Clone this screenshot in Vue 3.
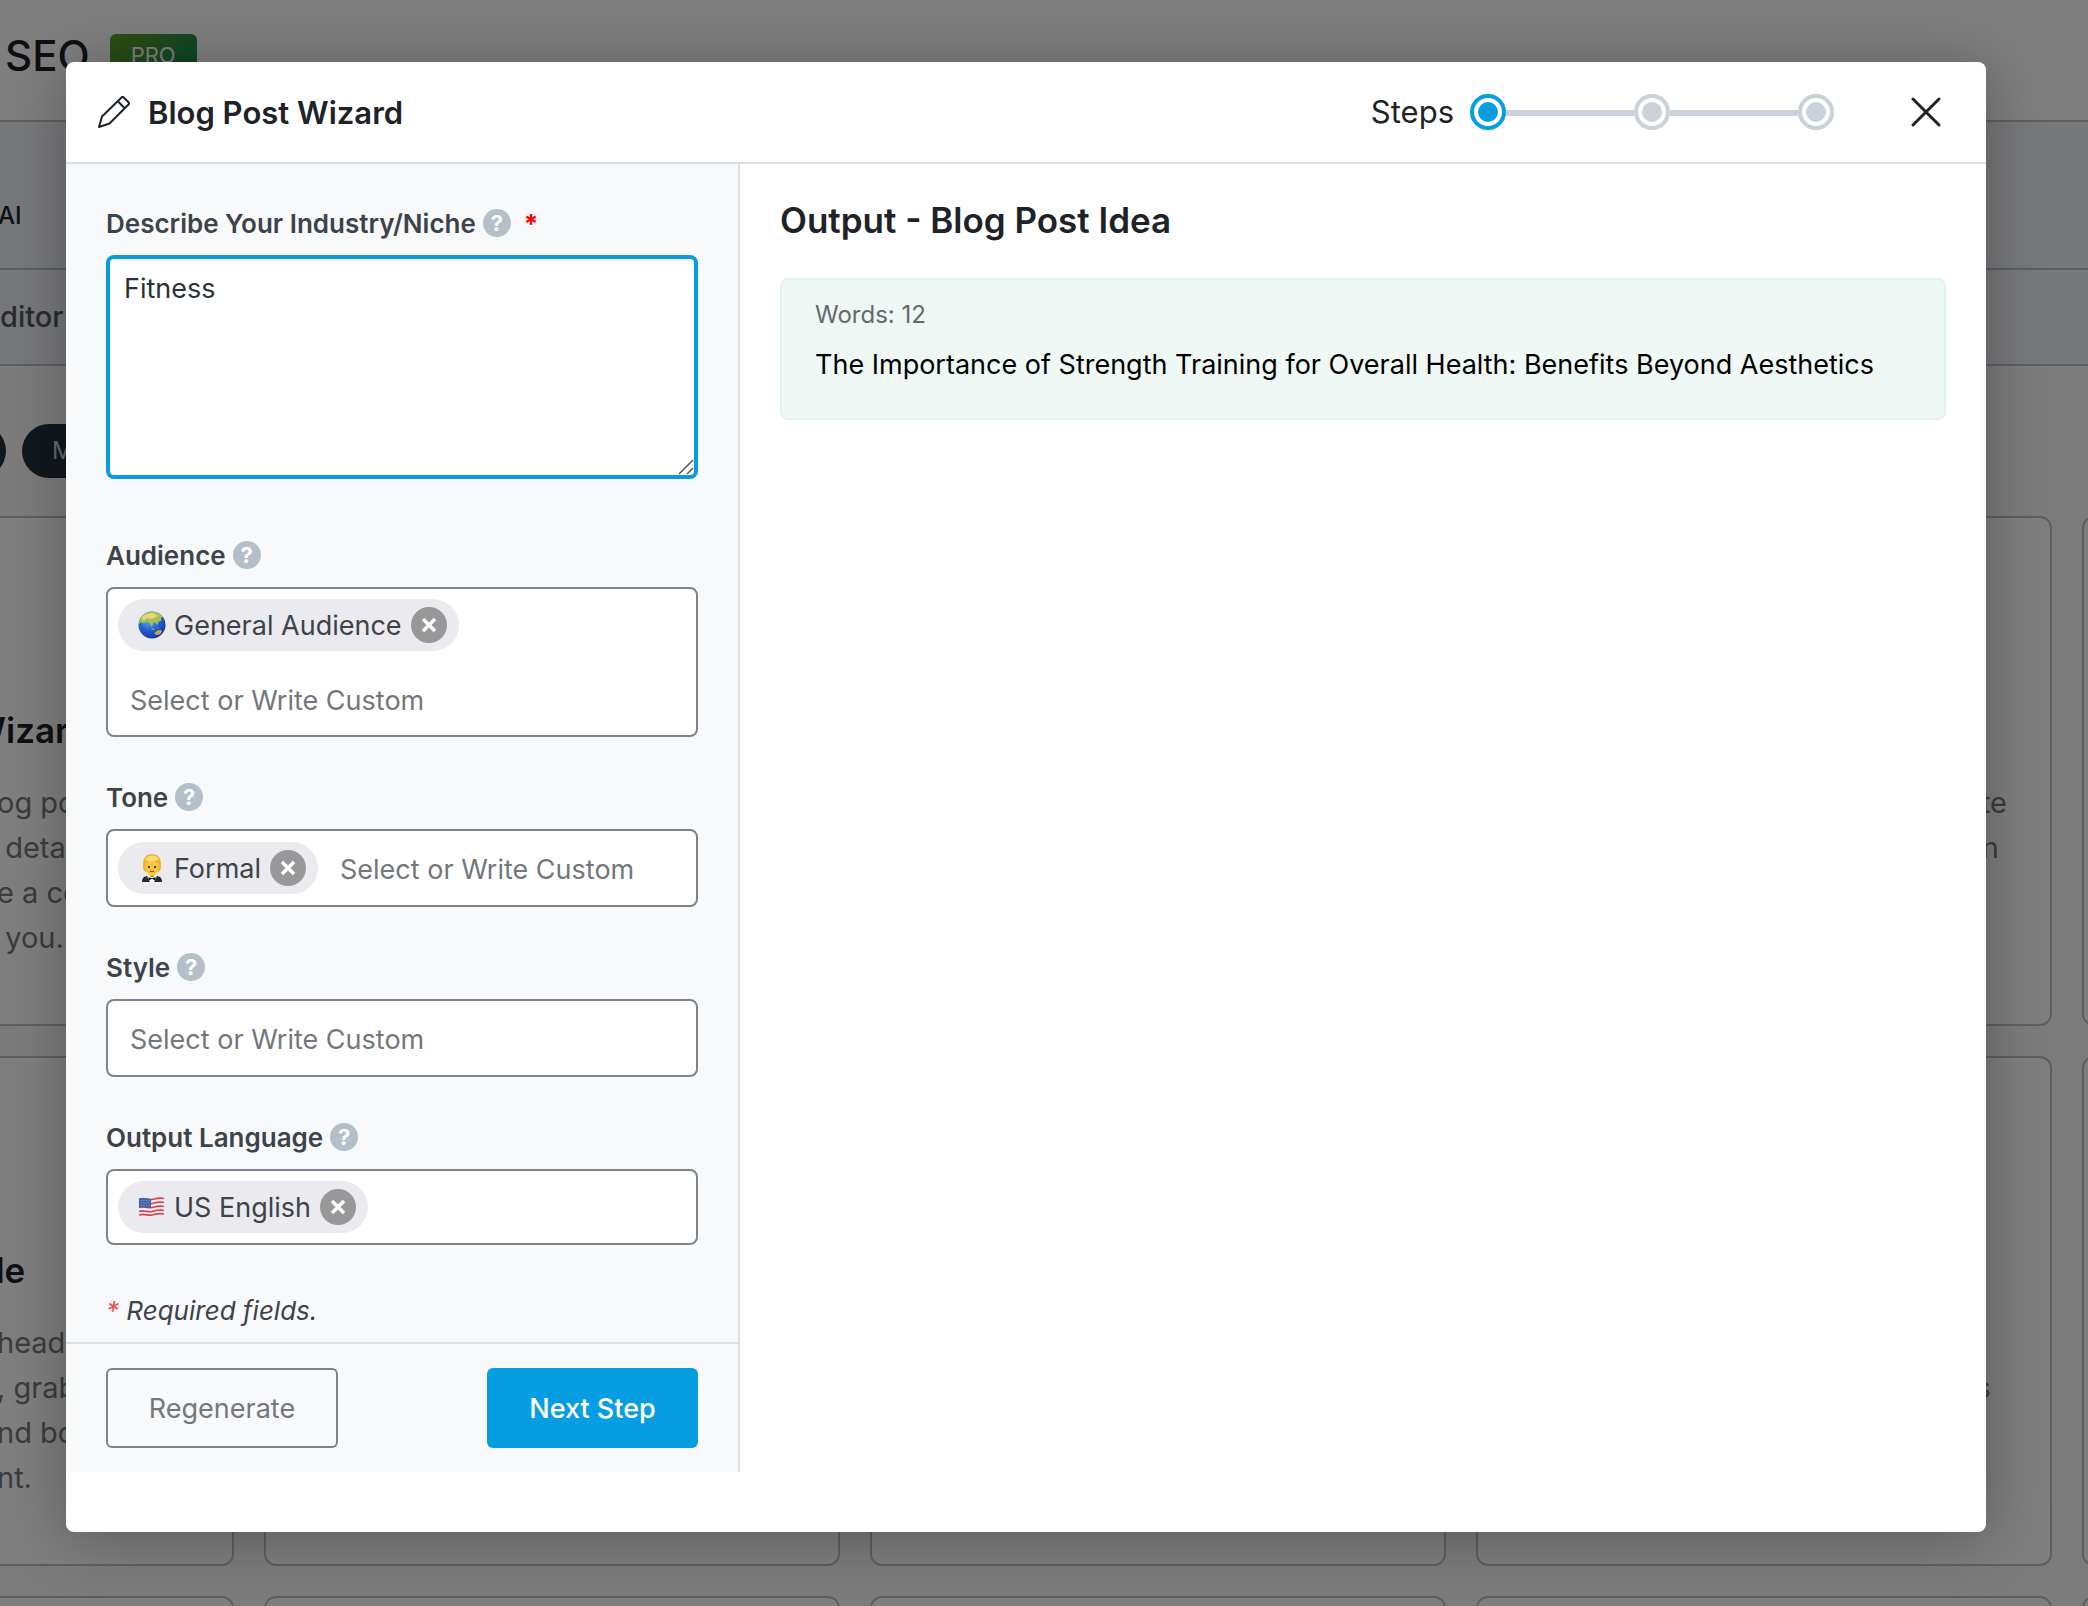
<script setup>
import { ref } from 'vue'

const niche = ref('Fitness')
const steps = ref([true, false, false])

const fields = ref([
  { id: 'audience', label: 'Audience', chip: 'General Audience', icon: 'globe', placeholder: 'Select or Write Custom', wrap: true },
  { id: 'tone', label: 'Tone', chip: 'Formal', icon: 'person', placeholder: 'Select or Write Custom' },
  { id: 'style', label: 'Style', chip: '', icon: '', placeholder: 'Select or Write Custom' },
  { id: 'language', label: 'Output Language', chip: 'US English', icon: 'flag', placeholder: '' },
])

const cards = [
  { title: 'Blog Post Wizard', start: ['og po', ' deta', 'e a co', ' you.'] },
  {}, {},
  { end: ['te', 'n '] },
  {},
  { title: 'Post Title', start: ['head', ', grab', 'nd bo', 'nt.'] },
  {}, {},
  { end: [' ', 's  '] },
  {}, {}, {}, {}, {}, {},
]
</script>

<template>
  <div class="screen">
    <div class="page" aria-hidden="true">
      <header class="brand">
        <span class="brand-name">SEO</span>
        <span class="pro">PRO</span>
      </header>
      <div class="tabs">AI</div>
      <div class="subtabs">ditor</div>
      <div class="filters">
        <span class="pill pill-first"></span>
        <span class="pill">M</span>
      </div>
      <div class="grid">
        <article v-for="(c, i) in cards" :key="i" class="card">
          <h3 class="card-title">{{ c.title }}</h3>
          <p v-if="c.start" class="lines lines-start"><span v-for="l in c.start" :key="l">{{ l }}</span></p>
          <p v-if="c.end" class="lines lines-end"><span v-for="l in c.end" :key="l">{{ l }}</span></p>
        </article>
      </div>
    </div>

    <div class="overlay">
      <section class="modal" role="dialog" aria-labelledby="wizard-title">
        <header class="modal-head">
          <svg class="pencil" viewBox="0 0 32 32" fill="none" stroke="#1d2327" stroke-width="2" stroke-linejoin="round" aria-hidden="true">
            <path d="M1 31 4 20.500 23.500 1.500c.7-.7 1.500-.7 2.200 0l4.800 4.800c.7.700.7 1.500 0 2.200L11.500 27.500zM20 5.500l6.500 6.500" />
          </svg>
          <h2 id="wizard-title" class="modal-title">Blog Post Wizard</h2>
          <span class="steps-label">Steps</span>
          <div class="steps">
            <span v-for="(on, i) in steps" :key="i" class="step" :class="{ on }"></span>
          </div>
          <button class="close" type="button" aria-label="Close">
            <svg viewBox="0 0 30 30" stroke="#1d2327" stroke-width="3" stroke-linecap="round"><path d="M2 2l26 26M28 2L2 28" /></svg>
          </button>
        </header>

        <div class="modal-body">
          <form class="side" @submit.prevent>
            <div class="fields">
              <div class="field field-area">
                <div class="label-row">
                  <label for="niche">Describe Your Industry/Niche</label>
                  <span class="help">?</span>
                  <span class="star">*</span>
                </div>
                <div class="area-wrap">
                  <textarea id="niche" v-model="niche" class="area"></textarea>
                  <svg class="grip" viewBox="0 0 16 16" stroke="#555" stroke-width="1.500"><path d="M1 15L15 1M9 15l6-6" /></svg>
                </div>
              </div>

              <div v-for="f in fields" :key="f.id" class="field">
                <div class="label-row">
                  <label :for="f.id">{{ f.label }}</label>
                  <span class="help">?</span>
                </div>
                <div class="tagbox" :class="{ wrap: f.wrap, plain: !f.placeholder }">
                  <span v-if="f.chip" class="chip">
                    <svg v-if="f.icon === 'globe'" class="emoji" viewBox="0 0 28 28" aria-hidden="true">
                      <defs>
                        <radialGradient id="sea" cx=".38" cy=".3" r=".75">
                          <stop offset="0" stop-color="#6fb4ee" />
                          <stop offset=".5" stop-color="#2663d6" />
                          <stop offset="1" stop-color="#16309b" />
                        </radialGradient>
                      </defs>
                      <circle cx="14" cy="14" r="13.500" fill="url(#sea)" />
                      <path d="M1.500 9C4 3.500 9 .8 15 .8c4 0 8 2 10 5l-2 1 .5 3-3 1-1 3.500-2.500-3-2 1-1 4-2-4-3-2-3 2-3-1-2 2z" fill="#a9bf52" />
                      <path d="M4 6c3-3 7-4 11-4l5 3-6 3-5-1-4 3z" fill="#e6d778" />
                      <path d="M16.500 22c1-2 4-3.500 6.500-3l1 1c-1 3-3 4-5 4-2-.3-2.500-1-2.500-2z" fill="#c9a24c" />
                      <path d="M14 17l3 1-1 1-3-1zM19 16l2 1-1 1z" fill="#79b35a" />
                    </svg>
                    <svg v-else-if="f.icon === 'person'" class="emoji" viewBox="0 0 28 28" aria-hidden="true">
                      <path d="M4 28c0-4 2-6 6-6h8c4 0 6 2 6 6z" fill="#25272c" />
                      <path d="M10 21l4 2 4-2 1 1-3 6h-4l-3-6z" fill="#fff" />
                      <path d="M11 18h6v3l-3 2-3-2z" fill="#e89e13" />
                      <path d="M5.500 16C3.500 6 7 0 14 0s10.500 6 8.500 16l-2 2h-13z" fill="#eeb02c" />
                      <path d="M7.500 9c3-1 5-3 6-3s4 2 7 3v4c0 5-3 8.500-6.500 8.500S7.500 18 7.500 13z" fill="#fcc83b" />
                      <path d="M7 6c2-5 10-6.500 14-1-4 3-9 3.500-14 1z" fill="#fbdb73" />
                      <circle cx="11" cy="13" r="1.200" fill="#5a3a12" />
                      <circle cx="17" cy="13" r="1.200" fill="#5a3a12" />
                      <path d="M12 17.500h4" stroke="#9a4a18" stroke-width="1.200" />
                      <path d="M10.500 23l3.500 1.500 3.500-1.500v3.500L14 25l-3.500 1.500z" fill="#17181b" />
                    </svg>
                    <svg v-else class="emoji" viewBox="0 0 28 28" aria-hidden="true">
                      <path d="M1 6c5-2 9 1 13 0s8-2 12-1v16c-4-1-8 0-12 1s-8-1-13 1z" fill="#f4f2f3" />
                      <path d="M1 6.500c5-2 9 1 13 0s8-2 12-1M1 10.500c5-2 9 1 13 0s8-2 12-1M1 14.500c5-2 9 1 13 0s8-2 12-1M1 18.500c5-2 9 1 13 0s8-2 12-1M1 22c5-2 9 1 13 0s8-2 12-1" fill="none" stroke="#d8434e" stroke-width="1.800" />
                      <path d="M1 5.500c5-2 8 .4 12 .2v9.300c-4 .4-7-1.800-12 0z" fill="#3f65a8" />
                      <path d="M3 7.500h9M3 10h9M3 12.500h9" stroke="#8fa6d2" stroke-width="1" stroke-dasharray="1 1.500" />
                    </svg>
                    <span class="chip-text">{{ f.chip }}</span>
                    <button class="remove" type="button" :aria-label="'Remove ' + f.chip">
                      <svg viewBox="0 0 16 16" stroke="#fff" stroke-width="3.500"><path d="M2 2l12 12M14 2L2 14" /></svg>
                    </button>
                  </span>
                  <input :id="f.id" class="entry" type="text" :placeholder="f.placeholder">
                </div>
              </div>

              <p class="required"><span>*</span> Required fields.</p>
            </div>
            <footer class="actions">
              <button class="btn btn-outline" type="button">Regenerate</button>
              <button class="btn btn-primary" type="submit">Next Step</button>
            </footer>
          </form>

          <main class="output">
            <h2 class="output-title">Output - Blog Post Idea</h2>
            <div class="result">
              <p class="words">Words: 12</p>
              <p class="idea">The Importance of Strength Training for Overall Health: Benefits Beyond Aesthetics</p>
            </div>
          </main>
        </div>
      </section>
    </div>
  </div>
</template>

<style>
body { margin: 0; }
</style>

<style scoped>
.screen, .screen * { box-sizing: border-box; }
.screen {
  position: relative;
  min-height: 100vh;
  overflow: hidden;
  font-family: Inter, "Liberation Sans", sans-serif;
  color: #1d2327;
}
h2, h3, p { margin: 0; }
button, input, textarea { font: inherit; color: inherit; }

/* Dimmed page */
.page { position: absolute; inset: 0; overflow: hidden; background: #f9f9f9; }
.brand {
  display: flex; align-items: center; gap: 20px;
  height: 122px; padding: 0 0 10px 5px;
  background: #fff; border-bottom: 2px solid #b8bfc9;
}
.brand-name { font-size: 42px; font-weight: 500; }
.pro {
  height: 42px; padding: 0 21px; border-radius: 6px;
  font-size: 22px; line-height: 42px; color: #fff;
  background: linear-gradient(135deg, #5f9f1f, #108a54);
}
.tabs, .subtabs { background: #eef0f4; border-bottom: 2px solid #b8bfc9; font-weight: 500; }
.tabs { height: 148px; padding-top: 76px; font-size: 24px; line-height: 36px; margin-left: -2px; }
.subtabs { height: 96px; font-size: 29px; line-height: 94px; color: #50575e; }
.filters { display: flex; gap: 16px; padding: 58px 0 38px; }
.pill {
  width: 120px; height: 54px; padding-left: 30px; border-radius: 27px;
  background: #23303a; color: #d5d8db; font-size: 24px; line-height: 54px;
}
.pill-first { margin-left: -114px; }
.grid {
  display: grid; grid-template-columns: repeat(5, 576px); grid-auto-rows: 510px;
  gap: 30px; margin-left: -342px;
}
.card {
  padding: 190px 43px 0; overflow: hidden;
  background: #fff; border: 2px solid #b8bfc9; border-radius: 12px;
}
.card-title { height: 44px; font-size: 35px; line-height: 44px; font-weight: 600; text-align: center; }
.lines {
  display: flex; flex-direction: column; margin-top: 28px;
  font-size: 29px; line-height: 45px; color: #74787c; white-space: pre;
}
.lines-start { padding-left: 294px; }
.lines-end { text-align: right; }

/* Dialog */
.overlay {
  position: relative; display: flex; min-height: 100vh;
  padding: 62px 102px 74px 66px; background: rgba(0, 0, 0, .5);
}
.modal {
  flex: 1; display: flex; flex-direction: column; padding-bottom: 60px;
  background: #fff; border-radius: 8px; box-shadow: 0 6px 60px rgba(0, 0, 0, .3);
}
.modal-head {
  display: flex; align-items: center; height: 102px;
  padding: 0 40px 0 32px; border-bottom: 2px solid #dcdfe3;
}
.pencil { width: 32px; height: 32px; }
.modal-title { margin-left: 18px; padding-top: 2px; font-size: 31px; line-height: 40px; font-weight: 600; }
.steps-label { margin-left: auto; font-size: 31px; line-height: 40px; }
.steps { display: flex; align-items: center; margin-left: 16px; }
.step {
  position: relative; width: 36px; height: 36px; padding: 4px;
  border: 4px solid #cbd1da; border-radius: 50%;
  background: #cbd1da content-box;
}
.step.on { border-color: #069de3; background-color: #069de3; }
.step + .step { margin-left: 128px; }
.step + .step::before {
  content: ""; position: absolute; top: 12px; right: 32px;
  width: 128px; height: 6px; background: #cbd1da;
}
.close { display: flex; margin-left: 72px; padding: 5px; border: 0; background: none; }
.close svg { width: 30px; height: 30px; }

.modal-body { flex: 1; display: flex; }
.side {
  flex: 0 0 674px; min-width: 0; display: flex; flex-direction: column;
  background: #f8f9fb; border-right: 2px solid #dcdfe3;
}
.fields { flex: 1; padding: 45px 40px 12px; }
.field { margin-bottom: 46px; }
.field-area { margin-bottom: 62px; }
.label-row {
  display: flex; align-items: center; gap: 7px; height: 28px; margin-bottom: 18px;
  font-size: 26px; font-weight: 600; color: #3c434a;
}
.help {
  width: 28px; height: 28px; border-radius: 50%;
  font-size: 22px; line-height: 28px; font-weight: 700; text-align: center;
  color: #fff; background: #b5bfc9;
}
.star { margin-left: 6px; font-weight: 700; color: #f00; }
.area-wrap { position: relative; }
.area {
  display: block; width: 100%; height: 224px; padding: 9px 14px;
  border: 4px solid #0a9ae0; border-radius: 8px; outline: 0; resize: none;
  background: #fff; color: #2c3338; font-size: 27px; line-height: 42px;
}
.grip { position: absolute; right: 4px; bottom: 4px; width: 16px; height: 16px; }
.tagbox {
  display: flex; align-items: center; height: 78px; padding: 0 10px;
  border: 2px solid #7e8389; border-radius: 8px; background: #fff;
}
.tagbox.wrap { flex-wrap: wrap; align-content: flex-start; height: 150px; padding-top: 10px; }
.tagbox.plain { height: 76px; }
.chip {
  display: flex; align-items: center; height: 52px; padding: 0 12px 0 20px;
  border-radius: 26px; background: #ebebef; color: #3c434a; font-size: 27px;
}
.emoji { width: 28px; height: 28px; }
.chip-text { margin: 0 9px 0 8px; white-space: nowrap; }
.remove {
  display: flex; align-items: center; justify-content: center;
  width: 36px; height: 36px; padding: 0; border: 0; border-radius: 50%; background: #97989a;
}
.remove svg { width: 16px; height: 16px; }
.entry {
  flex: 1; width: 0; min-width: 0; height: 56px; padding: 2px 0 0 12px;
  border: 0; outline: 0; background: none; font-size: 27px;
}
.chip + .entry { padding-left: 22px; }
.wrap .chip + .entry { flex-basis: 100%; margin-top: 20px; padding-left: 12px; }
.entry::placeholder { color: #72777c; opacity: 1; }
.required { padding-top: 4px; font-size: 26px; line-height: 32px; font-style: italic; color: #3c434a; }
.required span { color: #e65054; }
.actions {
  display: flex; justify-content: space-between; padding: 24px 40px;
  border-top: 2px solid #dcdfe3;
}
.btn { height: 80px; border-radius: 6px; font-size: 27px; }
.btn-outline { width: 232px; border: 2px solid #7e8389; background: transparent; color: #72777c; }
.btn-primary { width: 211px; border: 0; background: #069de3; color: #fff; font-weight: 500; }

.output { flex: 1; min-width: 0; padding: 34px 40px; }
.output-title { font-size: 35px; line-height: 44px; font-weight: 600; }
.result {
  min-height: 142px; margin-top: 36px; padding: 20px 33px;
  border: 2px solid #e2f2ec; border-radius: 8px; background: #eff8f5;
}
.words { font-size: 24px; line-height: 30px; color: #646970; }
.idea { margin-top: 14px; font-size: 27px; line-height: 42px; color: #000; }
</style>
